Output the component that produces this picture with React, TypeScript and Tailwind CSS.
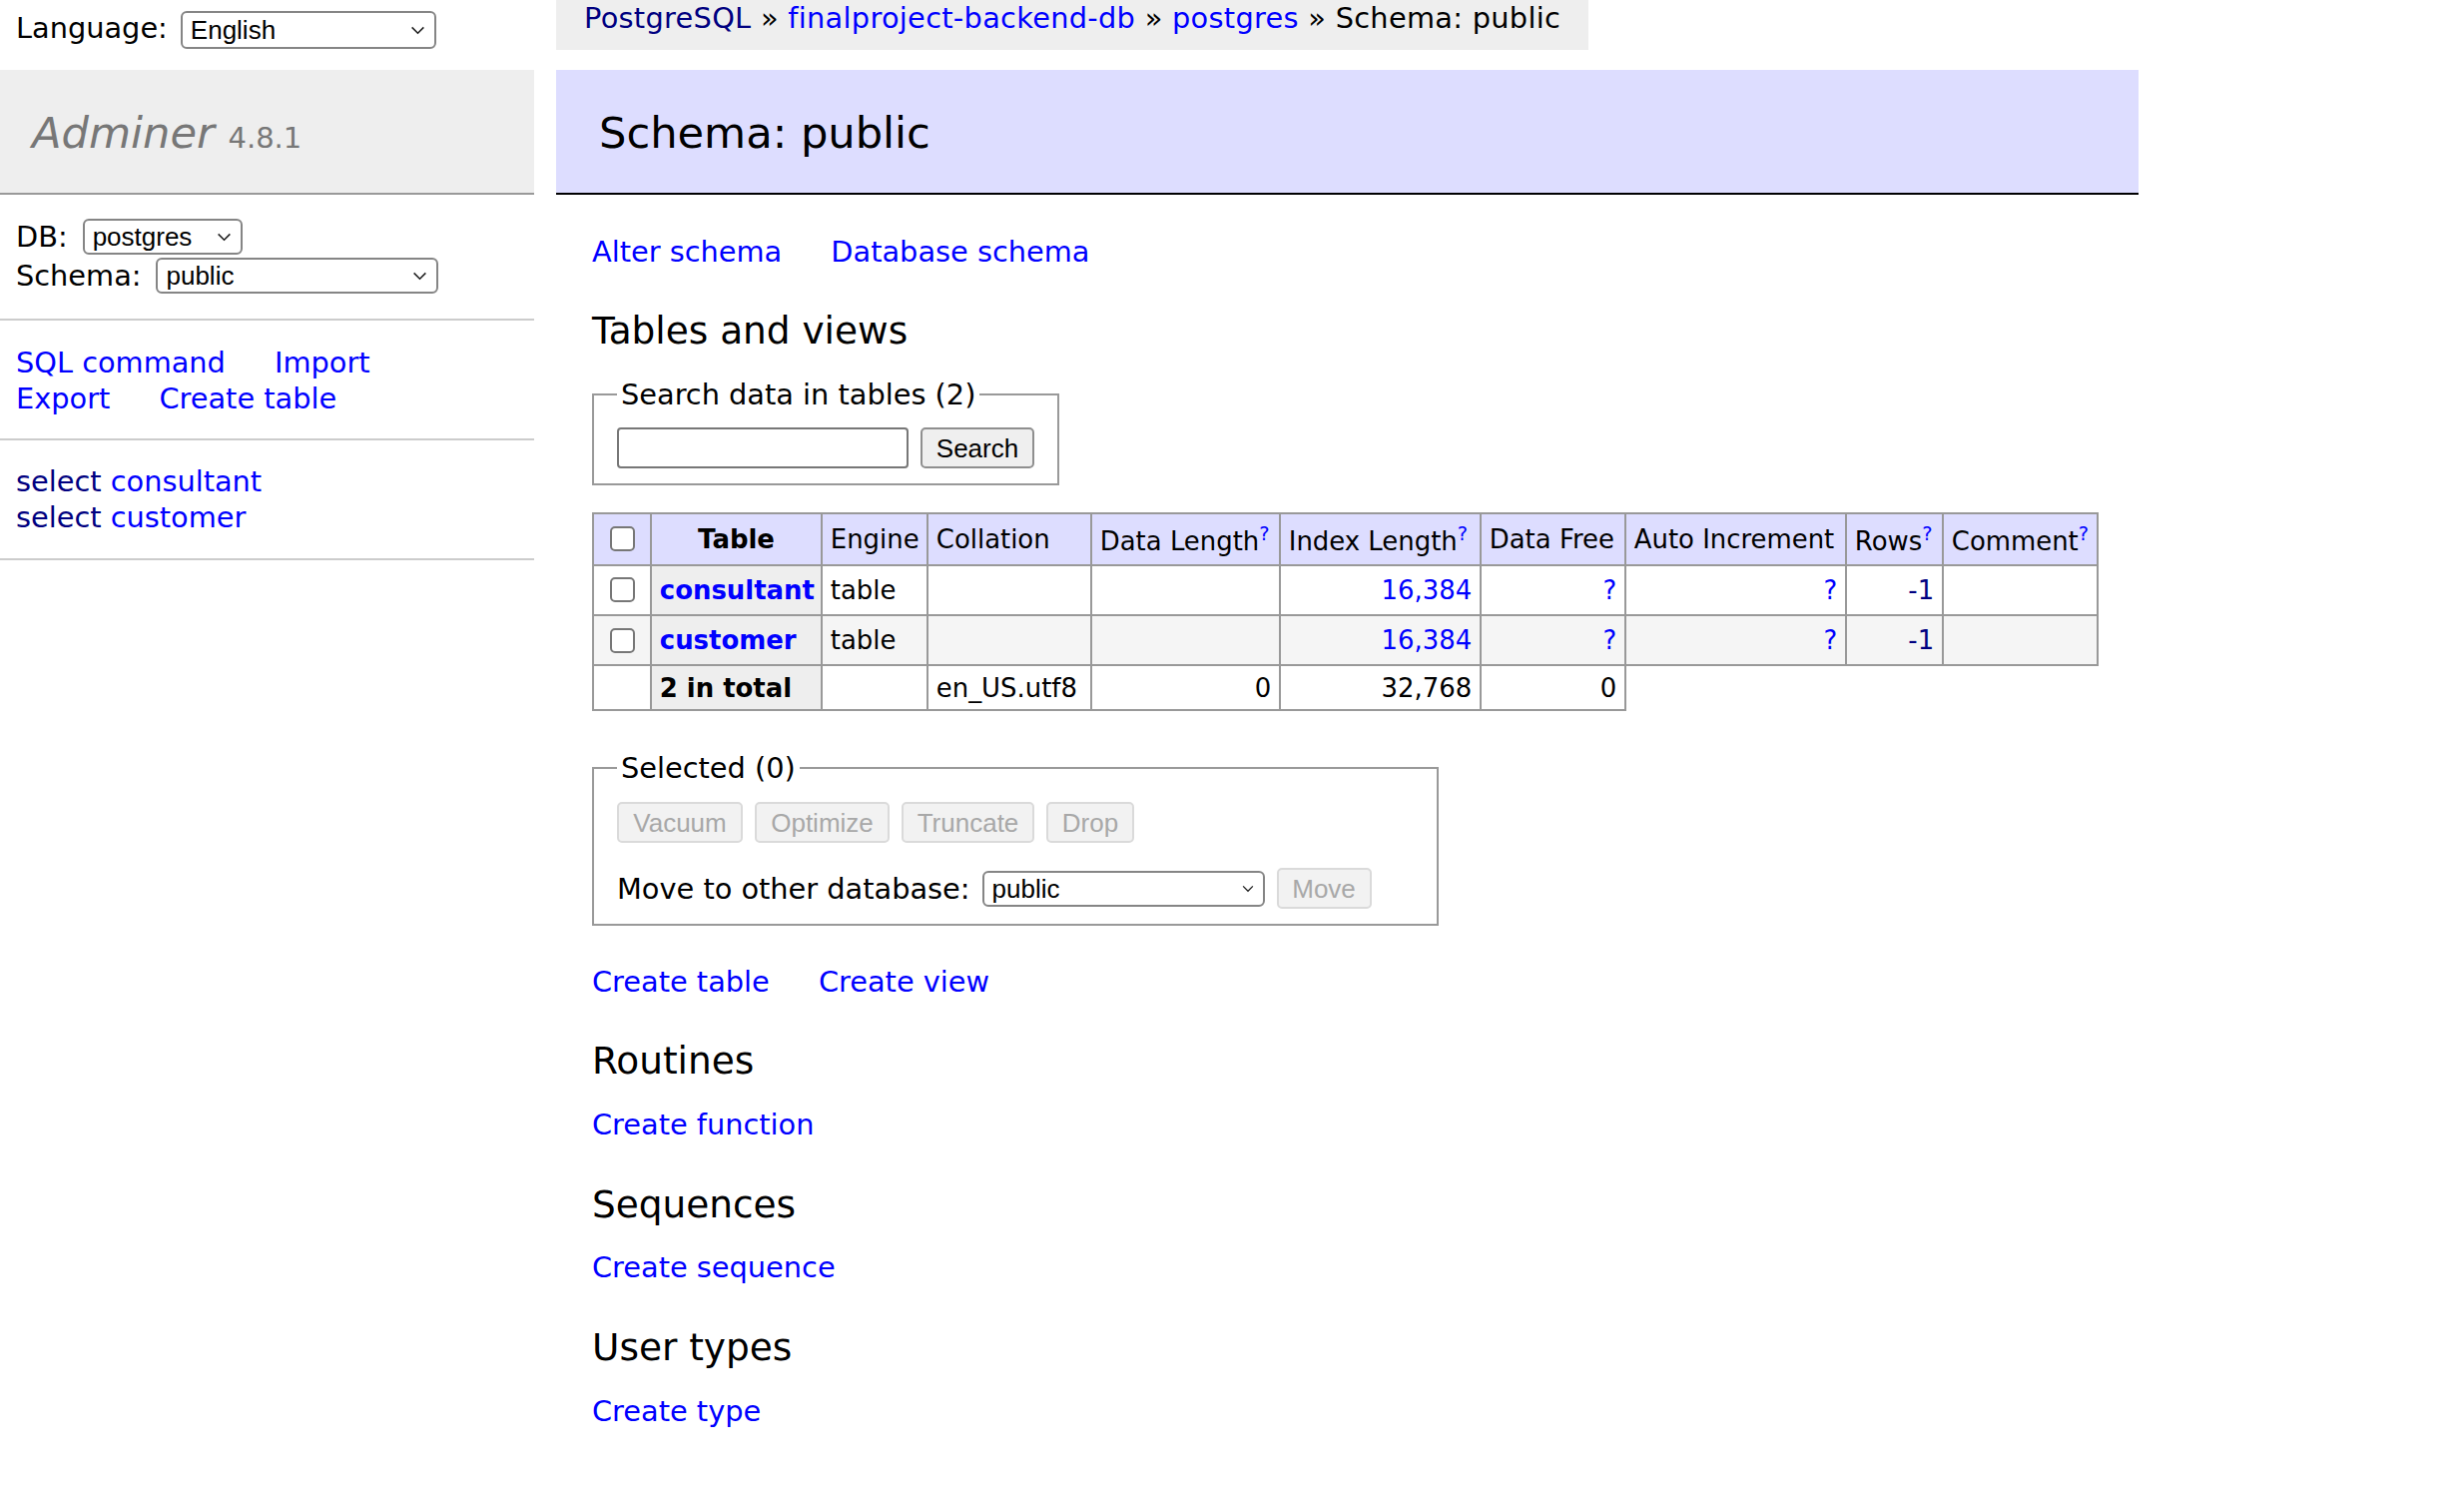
import React from 'react';

const blue = 'text-[#0000ff]';
const navy = 'text-[#000080]';

const Chevron = ({ small }: { small?: boolean }) => (
  <svg width={small ? 12 : 15} height={small ? 8 : 9} viewBox="0 0 16 10" fill="none">
    <path d="M1.5 1.5 L8 8 L14.5 1.5" stroke="#1f1f1f" strokeWidth="1.7" />
  </svg>
);

const FakeSelect = ({ value, className, small }: { value: string; className: string; small?: boolean }) => (
  <div
    className={`flex items-center justify-between border-2 border-[#858585] rounded-[6px] bg-white pl-[8px] pr-[9px] font-['Liberation_Sans',Arial,sans-serif] text-[26px] leading-none text-black ${className}`}
  >
    <span>{value}</span>
    <Chevron small={small} />
  </div>
);

const Btn = ({ label, disabled, className }: { label: string; disabled?: boolean; className: string }) => (
  <span
    className={`inline-flex items-center justify-center h-[41px] rounded-[5px] border-2 font-['Liberation_Sans',Arial,sans-serif] text-[26px] leading-none ${
      disabled ? 'bg-[#f2f2f2] border-[#dadada] text-[#a8a8a8]' : 'bg-[#efefef] border-[#8f8f8f] text-black'
    } ${className}`}
  >
    {label}
  </span>
);

const CheckBox = ({ tight }: { tight?: boolean }) => (
  <span
    className={`block w-[25px] h-[25px] ml-[8px] mr-[6px] border-2 border-[#777] rounded-[5px] bg-white ${
      tight ? 'my-[6.5px]' : 'my-[7px]'
    }`}
  />
);

const cell = 'border-2 border-[#999] px-[7.8px] py-[5.2px] whitespace-nowrap';
const h3 = 'mt-[37.4px] pt-[3px] text-[37.44px] leading-[43.8px] font-normal';

const rows = [
  { name: 'consultant', bg: 'bg-white' },
  { name: 'customer', bg: 'bg-[#f5f5f5]' },
];

export default function App() {
  return (
    <div className="flex items-start min-h-screen bg-white text-black font-['DejaVu_Sans',Verdana,sans-serif] text-[28.8px] leading-[36px]">
      {/* MENU */}
      <div className="w-[535px] shrink-0">
        <div className="h-[70px] pl-[16px] pt-[10px] flex items-start">
          <span>Language:</span>
          <FakeSelect value="English" className="ml-[13px] mt-[1px] w-[256px] h-[38px]" />
        </div>

        <h1 className="bg-[#eee] text-[#777] border-b-2 border-[#999] pl-[32px] pt-[36px] pb-[33px] text-[43.2px] leading-[54px] font-normal">
          <span className="italic">Adminer</span> <span className="text-[29px] leading-none">4.8.1</span>
        </h1>

        <div className="border-b-2 border-[#ccc] pl-[16px] pt-[24px] pb-[25px] flex flex-col gap-[3px]">
          <div className="flex items-center h-[36px]">
            <span>DB:</span>
            <FakeSelect value="postgres" className="ml-[15px] w-[160px] h-[36px]" />
          </div>
          <div className="flex items-center h-[36px]">
            <span>Schema:</span>
            <FakeSelect value="public" className="ml-[15px] w-[283px] h-[36px]" />
          </div>
        </div>

        <div className="border-b-2 border-[#ccc] pl-[16px] pt-[24px] pb-[22px]">
          <div>
            <a className={`${blue} mr-[40px]`}>SQL command</a> <a className={blue}>Import</a>
          </div>
          <div>
            <a className={`${blue} mr-[40px]`}>Export</a> <a className={blue}>Create table</a>
          </div>
        </div>

        <div className="border-b-2 border-[#ccc] pl-[16px] pt-[23px] pb-[23px]">
          {rows.map((r) => (
            <div key={r.name}>
              <a className={navy}>select</a> <a className={blue}>{r.name}</a>
            </div>
          ))}
        </div>
      </div>

      {/* CONTENT */}
      <div className="ml-[22px] flex flex-col">
        <div className="self-start bg-[#eee] h-[50px] px-[28px] pt-[1px] leading-[34px] tracking-[0.3px] whitespace-nowrap">
          <a className={navy}>PostgreSQL</a> » <a className={blue}>finalproject-backend-db</a> »{' '}
          <a className={blue}>postgres</a> » Schema: public
        </div>

        <h2 className="mt-[20px] bg-[#ddf] border-b-2 border-black pl-[43px] pt-[36px] pb-[33px] text-[43.2px] leading-[54px] font-normal">
          Schema: public
        </h2>

        <div className="pl-[36px] pr-[40px] pb-[60px]">
          <p className="mt-[39px] pt-[1px] leading-[35px]">
            <a className={`${blue} mr-[40px]`}>Alter schema</a> <a className={blue}>Database schema</a>
          </p>

          <h3 className={h3}>Tables and views</h3>

          <fieldset className="mt-[23px] w-fit border-2 border-[#999] px-[23px] pt-[15px] pb-[15px]">
            <legend className="px-[4px]">Search data in tables (2)</legend>
            <div className="flex items-center gap-[12px]">
              <span className="block w-[292px] h-[41px] border-2 border-[#777] rounded-[4px] bg-white" />
              <Btn label="Search" className="w-[114px]" />
            </div>
          </fieldset>

          <table className="mt-[27px] border-collapse table-fixed w-[1509px] text-[25.92px] leading-[32.4px]">
            <colgroup>
              <col className="w-[58px]" />
              <col className="w-[171px]" />
              <col className="w-[106px]" />
              <col className="w-[164px]" />
              <col className="w-[189px]" />
              <col className="w-[201px]" />
              <col className="w-[145px]" />
              <col className="w-[221px]" />
              <col className="w-[97px]" />
              <col className="w-[155px]" />
            </colgroup>
            <thead>
              <tr className="bg-[#ddf]">
                <td className={cell}>
                  <CheckBox />
                </td>
                <th className={`${cell} px-[13px] text-center font-bold`}>Table</th>
                <td className={cell}>Engine</td>
                <td className={cell}>Collation</td>
                <td className={`${cell} pt-[9px]`}>
                  Data Length<sup className={blue}>?</sup>
                </td>
                <td className={`${cell} pt-[9px]`}>
                  Index Length<sup className={blue}>?</sup>
                </td>
                <td className={cell}>Data Free</td>
                <td className={cell}>Auto Increment</td>
                <td className={`${cell} pt-[9px]`}>
                  Rows<sup className={blue}>?</sup>
                </td>
                <td className={`${cell} pt-[9px]`}>
                  Comment<sup className={blue}>?</sup>
                </td>
              </tr>
            </thead>
            <tbody>
              {rows.map((r) => (
                <tr key={r.name} className={r.bg}>
                  <td className={cell}>
                    <CheckBox tight />
                  </td>
                  <th className={`${cell} bg-[#eee] text-left font-bold`}>
                    <a className={blue}>{r.name}</a>
                  </th>
                  <td className={cell}>table</td>
                  <td className={cell}></td>
                  <td className={cell}></td>
                  <td className={`${cell} text-right ${blue}`}>16,384</td>
                  <td className={`${cell} text-right ${blue}`}>?</td>
                  <td className={`${cell} text-right ${blue}`}>?</td>
                  <td className={`${cell} text-right ${navy}`}>-1</td>
                  <td className={cell}></td>
                </tr>
              ))}
              <tr>
                <td className={cell}></td>
                <th className={`${cell} bg-[#eee] text-left font-bold`}>2 in total</th>
                <td className={cell}></td>
                <td className={cell}>en_US.utf8</td>
                <td className={`${cell} text-right`}>0</td>
                <td className={`${cell} text-right`}>32,768</td>
                <td className={`${cell} text-right`}>0</td>
              </tr>
            </tbody>
          </table>

          <fieldset className="mt-[39px] w-[848px] border-2 border-[#999] px-[23px] pt-[16px] pb-[15px]">
            <legend className="px-[4px]">Selected (0)</legend>
            <div className="flex items-center gap-[12px]">
              <Btn label="Vacuum" disabled className="w-[126px]" />
              <Btn label="Optimize" disabled className="w-[135px]" />
              <Btn label="Truncate" disabled className="w-[133px]" />
              <Btn label="Drop" disabled className="w-[88px]" />
            </div>
            <div className="mt-[25px] flex items-center">
              <span>Move to other database:</span>
              <FakeSelect value="public" small className="ml-[12px] w-[283px] h-[36px]" />
              <Btn label="Move" disabled className="ml-[12px] w-[95px]" />
            </div>
          </fieldset>

          <p className="mt-[38px] pt-[1px] leading-[35px]">
            <a className={`${blue} mr-[40px]`}>Create table</a> <a className={blue}>Create view</a>
          </p>

          <h3 className={h3}>Routines</h3>
          <p className="mt-[23px]">
            <a className={blue}>Create function</a>
          </p>

          <h3 className={h3}>Sequences</h3>
          <p className="mt-[23px]">
            <a className={blue}>Create sequence</a>
          </p>

          <h3 className={h3}>User types</h3>
          <p className="mt-[23px]">
            <a className={blue}>Create type</a>
          </p>
        </div>
      </div>
    </div>
  );
}
